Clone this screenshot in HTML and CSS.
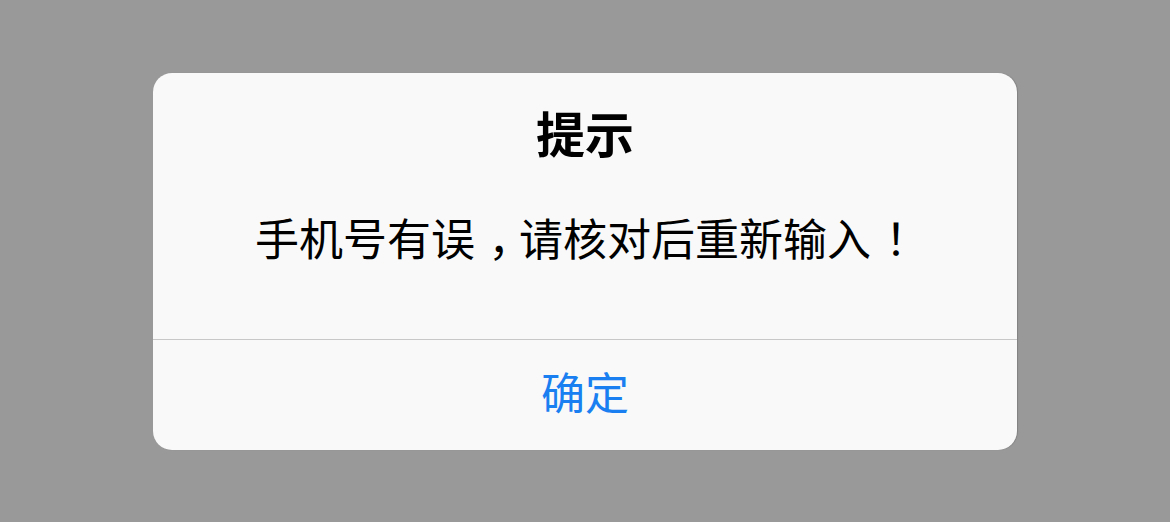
FILE: index.html
```html
<!DOCTYPE html>
<html lang="zh-CN">
<head>
<meta charset="utf-8">
<link rel="stylesheet" href="styles.css">
</head>
<body>
<div class="overlay">
  <div class="dialog">
    <div class="dialog-body">
      <div class="dialog-title">提示</div>
      <div class="dialog-message">手机号有误<span class="punct-comma">，</span>请核对后重新输入<span class="punct-center">！</span></div>
    </div>
    <div class="dialog-footer">
      <div class="dialog-button">确定</div>
    </div>
  </div>
</div>
</body>
</html>
```
FILE: styles.css
```css
html, body {
  margin: 0;
  padding: 0;
  height: 100%;
}
body {
  background: #999999;
  font-family: "Noto Sans CJK SC", "Noto Sans", sans-serif;
}
.overlay {
  height: 522px;
  display: flex;
  align-items: center;
  justify-content: center;
}
.dialog {
  width: 864px;
  height: 377px;
  background: #f9f9f9;
  border-radius: 19px;
  display: flex;
  flex-direction: column;
  overflow: hidden;
  box-shadow: 1px 0 1px rgba(0,0,0,0.15);
}
.dialog-body {
  height: 267px;
  box-sizing: border-box;
  padding-top: 33px;
  border-bottom: 1px solid #c8c8c8;
  text-align: center;
}
.dialog-title {
  font-size: 49px;
  line-height: 52px;
  font-weight: 700;
  color: #000;
}
.dialog-message {
  margin-top: 54px;
  font-size: 44px;
  line-height: 50px;
  color: #000;
}
.punct-center {
  padding-left: 0.32em;
  letter-spacing: -0.32em;
}
.punct-comma {
  padding-left: 0.3em;
  letter-spacing: -0.3em;
}
.dialog-footer {
  flex: 1;
  display: flex;
  align-items: center;
  justify-content: center;
  padding-bottom: 8px;
}
.dialog-button {
  font-size: 44px;
  line-height: 48px;
  color: #1a7ff0;
}
```
